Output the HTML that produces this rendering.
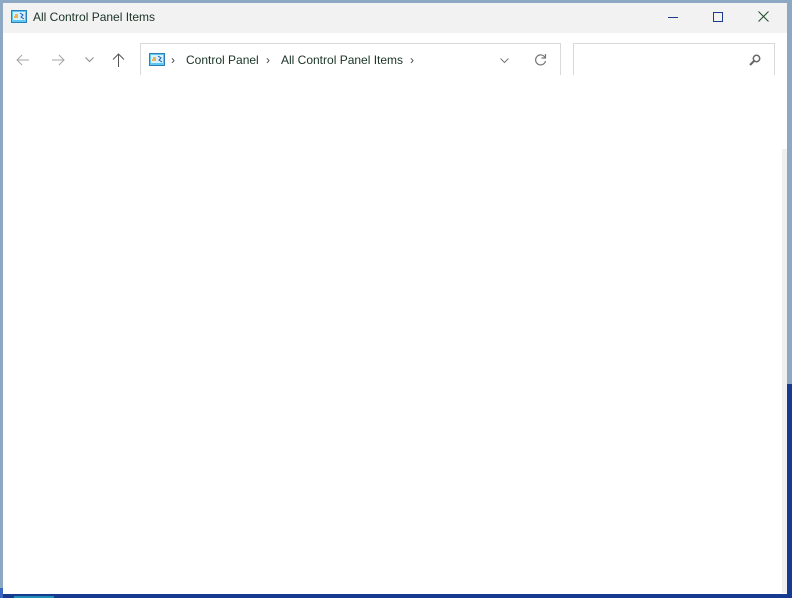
<!DOCTYPE html>
<html><head><style>
*{margin:0;padding:0;box-sizing:border-box}
body{width:792px;height:598px;overflow:hidden;background:#8ca8c2;position:relative;font-family:"Segoe UI","Liberation Sans",sans-serif;}
.abs{position:absolute}
.txt{font-size:12px;color:#1a3326;white-space:nowrap}
</style></head><body>
<div class="abs" style="left:786px;top:384px;width:6px;height:214px;background:#163a8f"></div>
<div class="abs" style="left:0;top:594px;width:792px;height:4px;background:#163a8f"></div>
<div class="abs" style="left:14px;top:596px;width:40px;height:2px;background:#1f8fb5"></div>
<div class="abs" style="left:0;top:588px;width:3px;height:10px;background:#3a68c0"></div>
<div class="abs" style="left:3px;top:3px;width:784px;height:591px;background:#fff"></div>
<div class="abs" style="left:3px;top:3px;width:784px;height:30px;background:#f2f2f2"></div>
<svg class="abs" style="left:11px;top:10px" width="16" height="13" viewBox="0 0 16 13">
<rect x="0.5" y="0.5" width="15" height="12" fill="#5fc8f0" stroke="#2a7fb8"/>
<rect x="2" y="2" width="12" height="8" fill="#d8f1fc"/>
<path d="M3 7h4M4 5h3" stroke="#f0a020" stroke-width="1.5"/>
<path d="M9 3l3 2-2 2 3 2" stroke="#2060b0" fill="none"/>
</svg>
<div class="abs txt" style="left:33px;top:10px;">All Control Panel Items</div>
<div class="abs" style="left:668px;top:17px;width:10px;height:1px;background:#1a3a8f"></div>
<div class="abs" style="left:713px;top:12px;width:10px;height:10px;border:1px solid #1a3a8f"></div>
<svg class="abs" style="left:758px;top:11px" width="11" height="11"><path d="M0.5 .5L10.5 10.5M10.5 .5L.5 10.5" stroke="#1e4d2b" stroke-width="1"/></svg>
<svg class="abs" style="left:16px;top:54px" width="14" height="12"><path d="M13 6H1M6 1L1 6l5 5" stroke="#a5a5a5" fill="none"/></svg>
<svg class="abs" style="left:51px;top:54px" width="14" height="12"><path d="M1 6h12M8 1l5 5-5 5" stroke="#a5a5a5" fill="none"/></svg>
<svg class="abs" style="left:85px;top:57px" width="9" height="6"><path d="M.5 .5l4 4 4-4" stroke="#8a8a8a" fill="none"/></svg>
<svg class="abs" style="left:112px;top:53px" width="13" height="14"><path d="M6.5 14V1M1 6.5l5.5-5.5 5.5 5.5" stroke="#555" fill="none"/></svg>
<div class="abs" style="left:140px;top:43px;width:421px;height:40px;border:1px solid #d9d9d9;border-bottom:none"></div>
<svg class="abs" style="left:149px;top:53px" width="16" height="13" viewBox="0 0 16 13">
<rect x="0.5" y="0.5" width="15" height="12" fill="#5fc8f0" stroke="#2a7fb8"/>
<rect x="2" y="2" width="12" height="8" fill="#d8f1fc"/>
<path d="M3 7h4M4 5h3" stroke="#f0a020" stroke-width="1.5"/>
<path d="M9 3l3 2-2 2 3 2" stroke="#2060b0" fill="none"/>
</svg>
<div class="abs txt" style="left:171px;top:53px;color:#444">›</div>
<div class="abs txt" style="left:186px;top:53px;">Control Panel</div>
<div class="abs txt" style="left:266px;top:53px;color:#444">›</div>
<div class="abs txt" style="left:281px;top:53px;">All Control Panel Items</div>
<div class="abs txt" style="left:410px;top:53px;color:#444">›</div>
<svg class="abs" style="left:500px;top:58px" width="9" height="6"><path d="M.5 .5l4 4 4-4" stroke="#777" fill="none"/></svg>
<svg class="abs" style="left:534px;top:53px" width="13" height="13"><path d="M11 4.5A5 5 0 1 0 11.5 8" stroke="#777" fill="none" stroke-width="1.2"/><path d="M11.5 1v4h-4" stroke="#777" fill="none" stroke-width="1.2"/></svg>
<div class="abs" style="left:573px;top:43px;width:202px;height:40px;border:1px solid #d9d9d9;border-bottom:none"></div>
<svg class="abs" style="left:749px;top:54px" width="12" height="12"><circle cx="7.5" cy="4.5" r="3.2" stroke="#666" stroke-width="1.5" fill="none"/><path d="M5 7L1 11" stroke="#666" stroke-width="2"/></svg>
<div class="abs" style="left:3px;top:75px;width:784px;height:518px;background:#fff"></div>
<div class="abs" style="left:782px;top:149px;width:5px;height:444px;background:#f0f0f0"></div>
</body></html>
